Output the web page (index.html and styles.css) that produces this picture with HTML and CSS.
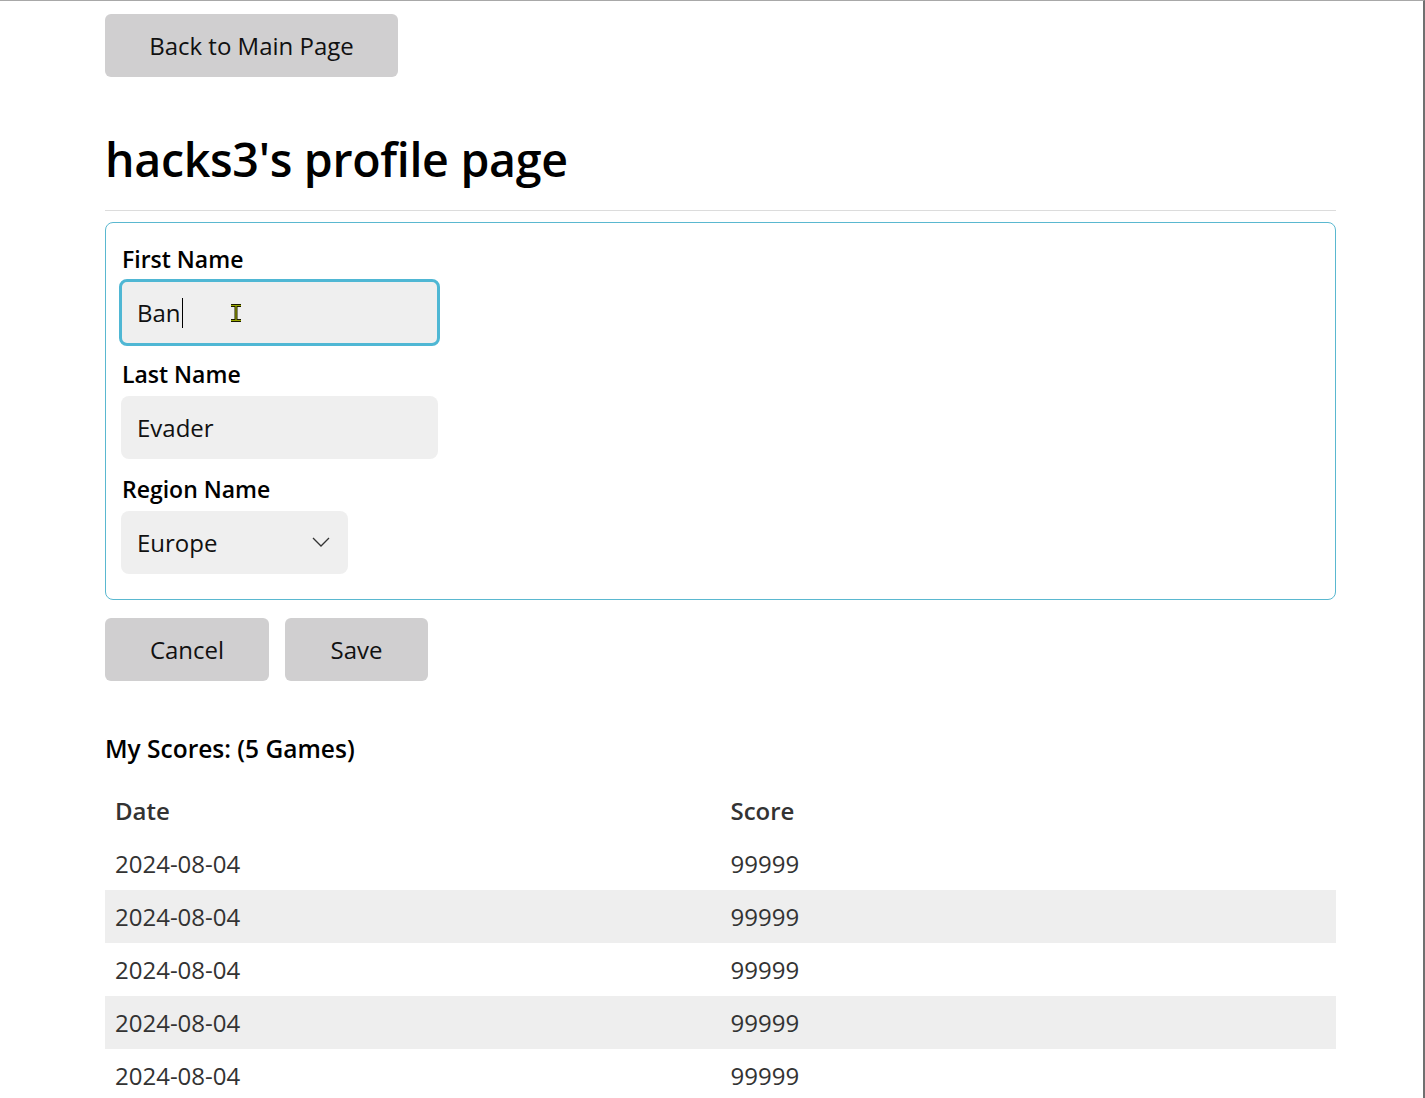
FILE: index.html
```html
<!DOCTYPE html>
<html lang="en">
<head>
<meta charset="utf-8">
<title>hacks3's profile page</title>
<link rel="stylesheet" href="styles.css">
</head>
<body>
<div class="frame">
  <main class="page">
    <button class="btn btn-back" type="button">Back to Main Page</button>
    <h1 class="title">hacks3's profile page</h1>
    <hr class="rule">
    <form class="profile-box">
      <label class="field-label">First Name</label>
      <div class="input input-focused">
        <span class="input-text">Ban</span><span class="caret"></span>
        <svg class="ibeam" width="12" height="18" viewBox="0 0 12 18"><path d="M1 1.5h10M1 16.5h10M6 1.5v15" stroke="#1a1a00" stroke-width="3" fill="none"/><path d="M1 1.5h10M1 16.5h10M6 1.5v15" stroke="#9aa800" stroke-width="1.2" fill="none"/></svg>
      </div>
      <label class="field-label">Last Name</label>
      <div class="input"><span class="input-text">Evader</span></div>
      <label class="field-label">Region Name</label>
      <div class="input select">
        <span class="input-text">Europe</span>
        <svg class="chevron" width="18" height="10" viewBox="0 0 18 10"><path d="M1 1l8 8 8-8" stroke="#333" stroke-width="1.3" fill="none"/></svg>
      </div>
    </form>
    <div class="actions">
      <button class="btn btn-cancel" type="button">Cancel</button>
      <button class="btn btn-save" type="button">Save</button>
    </div>
    <h2 class="scores-title">My Scores: (5 Games)</h2>
    <table class="scores">
      <thead>
        <tr><th>Date</th><th>Score</th></tr>
      </thead>
      <tbody>
        <tr><td>2024-08-04</td><td>99999</td></tr>
        <tr><td>2024-08-04</td><td>99999</td></tr>
        <tr><td>2024-08-04</td><td>99999</td></tr>
        <tr><td>2024-08-04</td><td>99999</td></tr>
        <tr><td>2024-08-04</td><td>99999</td></tr>
      </tbody>
    </table>
  </main>
</div>
</body>
</html>
```

FILE: styles.css
```css
* { box-sizing: border-box; }
html, body { margin: 0; padding: 0; background: #fff; }
body {
  font-family: "Open Sans", "Noto Sans", sans-serif;
  color: #111;
  overflow: hidden;
}
.frame {
  border-top: 1px solid #a8a8a8;
  border-right: 2px solid #707070;
  height: 1098px;
  width: 1425px;
}
.page {
  width: 1231px;
  margin-left: 105px;
  padding-top: 13px;
}
.btn {
  display: block;
  height: 63px;
  border: none;
  border-radius: 6px;
  background: #d0cfd0;
  font-family: inherit;
  font-size: 24px;
  color: #111;
  padding: 0 0 0 0;
  line-height: 64px;
}
.btn-back { width: 293px; }
.title {
  margin: 52px 0 0 0;
  font-size: 46.5px;
  font-weight: 600;
  line-height: 60px;
  color: #000;
  letter-spacing: -0.3px;
}
.rule {
  margin: 21px 0 0 0;
  border: none;
  border-top: 1px solid #dcdcdc;
  height: 0;
}
.profile-box {
  margin-top: 11px;
  border: 1px solid #5ab8d0;
  border-radius: 8px;
  padding: 18px 15px 25px 15px;
  display: flex;
  flex-direction: column;
  align-items: flex-start;
}
.field-label {
  display: block;
  height: 36px;
  line-height: 36px;
  font-size: 23px;
  font-weight: 600;
  color: #000;
  padding-left: 1px;
}
.field-label + .input { margin-top: 4px; }
.input + .field-label { margin-top: 12px; }
.input {
  position: relative;
  width: 317px;
  height: 63px;
  border-radius: 8px;
  background: #efefef;
  display: flex;
  align-items: center;
  padding-left: 16px;
  font-size: 24px;
  color: #111;
}
.input-focused {
  width: 321px;
  height: 67px;
  margin-left: -2px;
  margin-right: -2px;
  margin-bottom: -2px;
  border: 3px solid #4fb7d4;
  padding-left: 15px;
}
.field-label + .input-focused { margin-top: 2px; }
.caret {
  display: inline-block;
  width: 1px;
  height: 30px;
  background: #000;
  margin-left: 1px;
}
.ibeam {
  position: absolute;
  left: 108px;
  top: 22px;
}
.select { width: 227px; height: 63px; }
.chevron {
  position: absolute;
  right: 18px;
  top: 26px;
}
.actions {
  display: flex;
  gap: 16px;
  margin-top: 18px;
}
.btn-cancel { width: 164px; }
.btn-save { width: 143px; }
.scores-title {
  margin: 50px 0 0 0;
  font-size: 24.5px;
  font-weight: 600;
  line-height: 36px;
  color: #000;
}
.scores {
  margin-top: 17px;
  width: 1231px;
  border-collapse: collapse;
  font-size: 24px;
  color: #333;
}
.scores th, .scores td {
  width: 50%;
  height: 53px;
  padding: 0 10px;
  text-align: left;
  vertical-align: middle;
}
.scores th { font-weight: 600; }
.scores tbody tr:nth-child(even) { background: #eeeeee; }
```
